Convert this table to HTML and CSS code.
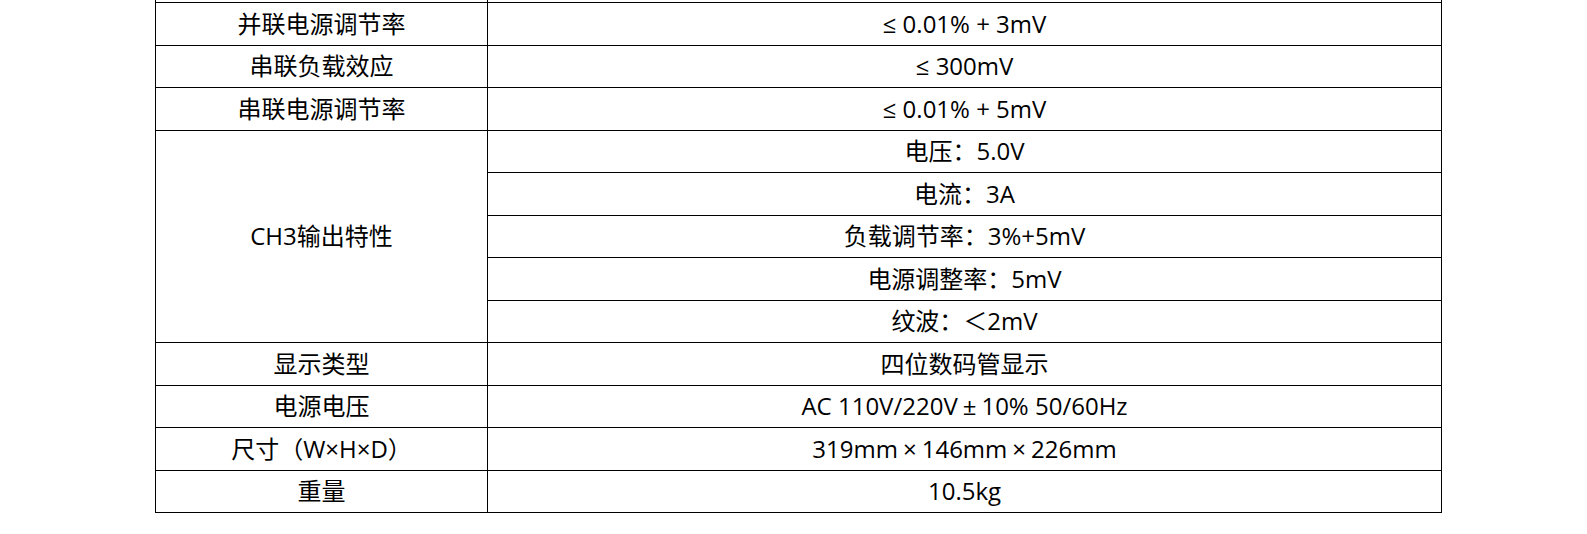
FILE: index.html
```html
<!DOCTYPE html>
<html lang="zh-CN">
<head>
<meta charset="utf-8">
<title>规格参数</title>
<link rel="stylesheet" href="styles.css">
</head>
<body>
<div class="page">
  <table class="spec">
    <tbody>
      <tr class="cut"><td class="name"></td><td class="value"></td></tr>
      <tr><td class="name">并联电源调节率</td><td class="value">≤ 0.01% + 3mV</td></tr>
      <tr><td class="name">串联负载效应</td><td class="value">≤ 300mV</td></tr>
      <tr><td class="name">串联电源调节率</td><td class="value">≤ 0.01% + 5mV</td></tr>
      <tr><td class="name" rowspan="5">CH3输出特性</td><td class="value">电压：5.0V</td></tr>
      <tr><td class="value">电流：3A</td></tr>
      <tr><td class="value">负载调节率：3%+5mV</td></tr>
      <tr><td class="value">电源调整率：5mV</td></tr>
      <tr><td class="value">纹波：＜2mV</td></tr>
      <tr><td class="name">显示类型</td><td class="value">四位数码管显示</td></tr>
      <tr><td class="name">电源电压</td><td class="value">AC 110V/220V<span class="sym">±</span>10% 50/60Hz</td></tr>
      <tr><td class="name">尺寸（W×H×D）</td><td class="value">319mm<span class="sym">×</span>146mm<span class="sym">×</span>226mm</td></tr>
      <tr><td class="name">重量</td><td class="value">10.5kg</td></tr>
    </tbody>
  </table>
</div>
</body>
</html>
```

FILE: styles.css
```css
html, body {
  margin: 0;
  padding: 0;
  background: #fff;
}

.page {
  padding-left: 155px;
  overflow: hidden;
}

.spec {
  border-collapse: collapse;
  width: 1287px;
  margin-top: -40.5px;
  font-family: "Open Sans", "Noto Sans CJK SC", sans-serif;
  font-size: 24px;
  color: #000;
  table-layout: fixed;
}

.spec tr {
  height: 42.5px;
}

.spec td {
  border: 1px solid #000;
  padding: 0;
  text-align: center;
  vertical-align: middle;
  line-height: 1;
}

.spec .name {
  width: 331px;
}

.spec .sym {
  margin: 0 5px;
}
```
